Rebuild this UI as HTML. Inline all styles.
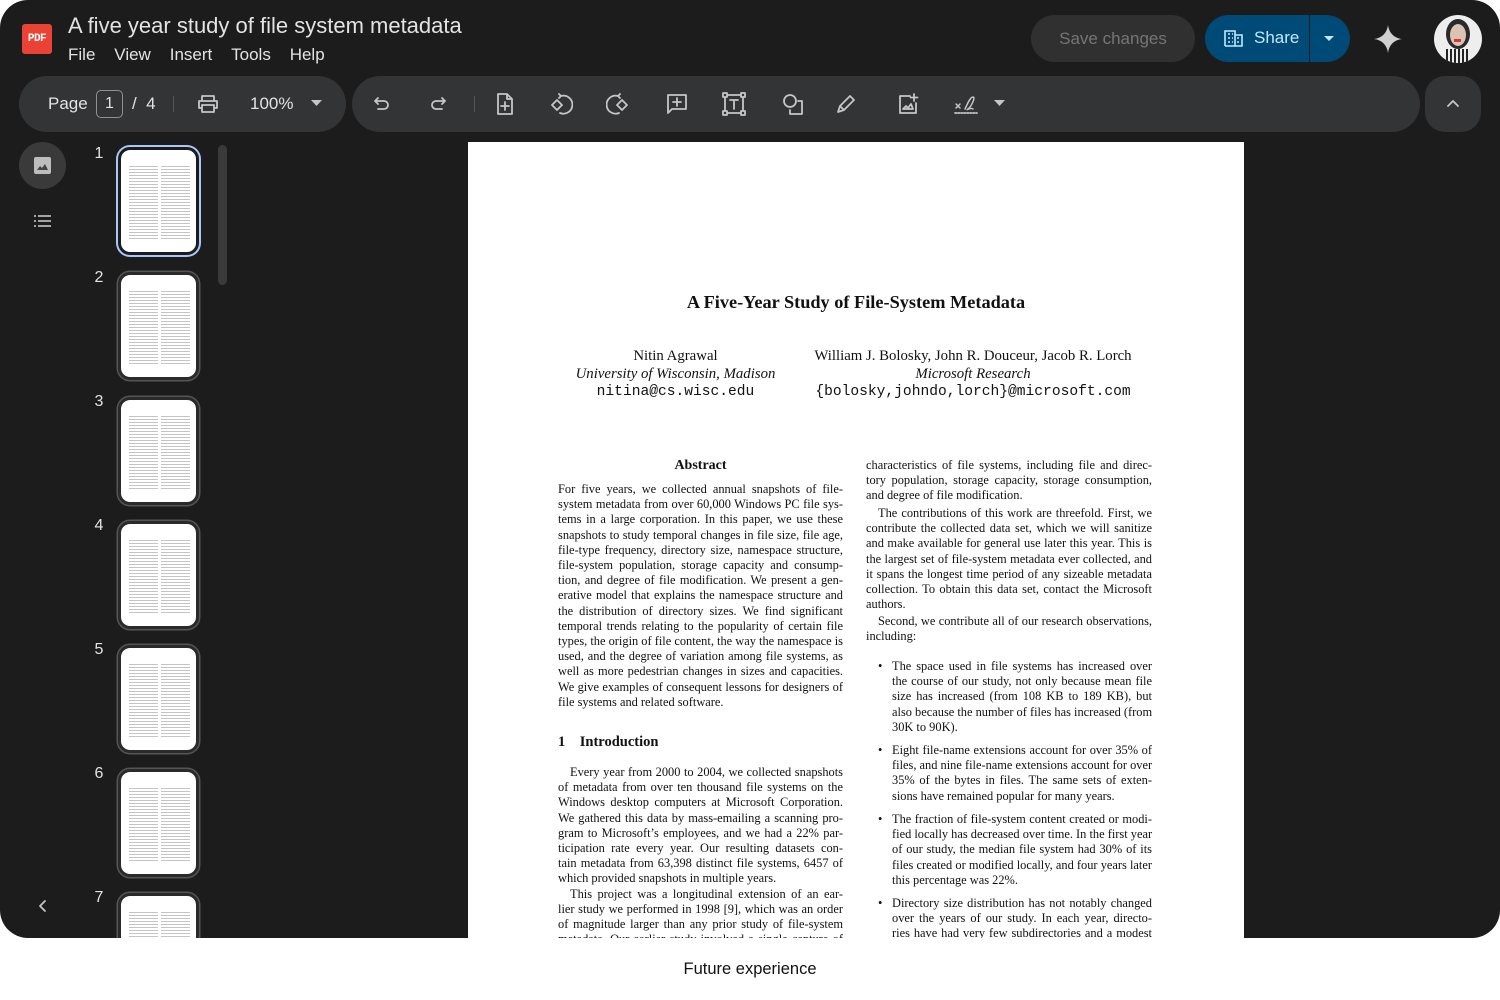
<!DOCTYPE html>
<html><head><meta charset="utf-8"><style>
*{margin:0;padding:0;box-sizing:border-box}
body{width:1500px;height:1000px;background:#fff;position:relative;overflow:hidden;font-family:"Liberation Sans",sans-serif}
#app{position:absolute;left:0;top:0;width:1500px;height:938px;background:#1c1c1c;border-radius:28px 28px 28px 28px;overflow:hidden}
.abs{position:absolute}
.t{color:#e3e3e3}
.bar{position:absolute;background:#333436;border-radius:28px}
.ic{position:absolute;stroke:#c4c7c5;fill:none;stroke-width:1.8;stroke-linecap:round;stroke-linejoin:round}
.num{position:absolute;color:#e3e3e3;font-size:16px;width:20px;text-align:center}
.th{position:absolute;left:118px;width:81px;height:108px;border-radius:12px;border:3px solid #2a2a2a;background:#fff;box-shadow:0 0 0 1.5px #555}
.th.sel{border-color:#1c1c1c;box-shadow:0 0 0 2px #a8c7fa}
.th i{position:absolute;top:16px;bottom:12px;width:29px;background:repeating-linear-gradient(#c4c4c4 0 1px,#fff 1px 3px)}
#page{position:absolute;left:468px;top:142px;width:776px;height:796px;background:#fff;font-family:"Liberation Serif",serif;color:#111}
.col{position:absolute;font-size:12.4px;line-height:15.2px}
.col div{text-align:justify;text-align-last:justify;white-space:nowrap;overflow:visible}
.col div.e{text-align-last:left}
.col div.in{text-indent:12px}
.bl div{padding-left:26px}
.bl div.b{position:relative}
.bl div.b:before{content:"•";position:absolute;left:12px}
</style></head><body>
<div id="app">
 <div class="abs" style="left:22px;top:24px;width:30px;height:30px;background:#ea4335;border-radius:3px;color:#fff;font:bold 11px 'Liberation Mono',monospace;text-align:center;line-height:30px;letter-spacing:-0.5px">PDF</div>
 <div class="abs t" style="left:68px;top:13px;font-size:22px">A five year study of file system metadata</div>
 <div class="abs t" style="left:68px;top:45px;font-size:17px;word-spacing:0">File&nbsp;&nbsp;&nbsp;&nbsp;View&nbsp;&nbsp;&nbsp;&nbsp;Insert&nbsp;&nbsp;&nbsp;&nbsp;Tools&nbsp;&nbsp;&nbsp;&nbsp;Help</div>
 <div class="abs" style="left:1031px;top:15px;width:164px;height:47px;border-radius:24px;background:#303030;color:#757575;font-size:17px;text-align:center;line-height:47px">Save changes</div>
 <div class="abs" style="left:1205px;top:15px;width:145px;height:47px;border-radius:24px;background:#004a77;"></div>
 <div class="abs" style="left:1309px;top:15px;width:1px;height:47px;background:#1c1c1c"></div>
 <svg class="abs" style="left:1224px;top:29px" width="20" height="18" viewBox="0 0 20 18"><path d="M1 17V2h10v15M11 6h7v11H1" fill="none" stroke="#c2e7ff" stroke-width="1.6"/><path d="M4 5h2M8 5h1M4 9h2M8 9h1M4 13h2M8 13h1M13 9h2M13 13h2" stroke="#c2e7ff" stroke-width="1.6"/></svg>
 <div class="abs" style="left:1254px;top:28px;color:#c2e7ff;font-size:17px">Share</div>
 <svg class="abs" style="left:1323px;top:35px" width="12" height="8"><path d="M1 1h10L6 6z" fill="#c2e7ff"/></svg>
 <svg class="abs" style="left:1373px;top:24px" width="30" height="30" viewBox="0 0 30 30"><path d="M15 1C16 9 21 14 29 15 21 16 16 21 15 29 14 21 9 16 1 15 9 14 14 9 15 1z" fill="#d0d0d0"/></svg>
 <div class="abs" style="left:1434px;top:15px;width:48px;height:48px;border-radius:50%;background:#eee;overflow:hidden">
  <div class="abs" style="left:12px;top:4px;width:24px;height:30px;border-radius:50%;background:#2a2a2a"></div>
  <div class="abs" style="left:16px;top:9px;width:16px;height:22px;border-radius:50%;background:#d9c3b5"></div>
  <div class="abs" style="left:20px;top:24px;width:7px;height:3px;background:#d33"></div>
  <div class="abs" style="left:12px;top:34px;width:24px;height:14px;background:repeating-linear-gradient(90deg,#222 0 2px,#eee 2px 4px)"></div>
 </div>

 <div class="bar" style="left:19px;top:76px;width:327px;height:56px"></div>
 <div class="abs t" style="left:48px;top:94px;font-size:17px">Page</div>
 <div class="abs t" style="left:96px;top:90px;width:27px;height:28px;border:1.5px solid #8e918f;border-radius:5px;font-size:16px;text-align:center;line-height:25px">1</div>
 <div class="abs t" style="left:132px;top:94px;font-size:17px">/&nbsp; 4</div>
 <div class="abs" style="left:173px;top:96px;width:1px;height:16px;background:#555"></div>
 <svg class="ic" style="left:197px;top:94px" width="22" height="20" viewBox="0 0 22 20"><path d="M5 6V2h12v4M5 14H2V7h18v7h-3M5 11h12v7H5z"/></svg>
 <div class="abs t" style="left:250px;top:94px;font-size:17px">100%</div>
 <svg class="abs" style="left:311px;top:100px" width="11" height="7"><path d="M0 0h11L5.5 6z" fill="#c4c7c5"/></svg>

 <div class="bar" style="left:352px;top:76px;width:1068px;height:56px"></div>
 <svg class="ic" style="left:372px;top:94px" width="20" height="20" viewBox="0 0 20 20"><path d="M6 4L3 7l3 3M3 7h9a4 4 0 010 8H6"/></svg>
 <svg class="ic" style="left:428px;top:94px" width="20" height="20" viewBox="0 0 20 20"><path d="M14 4l3 3-3 3M17 7H8a4 4 0 000 8h6"/></svg>
 <div class="abs" style="left:474px;top:96px;width:1px;height:16px;background:#555"></div>
 <svg class="ic" style="left:494px;top:92px" width="22" height="24" viewBox="0 0 22 24"><path d="M4 2h9l5 5v15H4zM13 2v5h5M11 10v8M7 14h8"/></svg>
 <svg class="ic" style="left:549px;top:92px" width="24" height="24" viewBox="0 0 24 24"><path d="M3 13l5-5 5 5-5 5zM12 4a9 9 0 11-1 17M12 4l-2-2M12 4l-2 2"/></svg>
 <svg class="ic" style="left:606px;top:92px" width="24" height="24" viewBox="0 0 24 24"><path d="M11 13l5-5 5 5-5 5zM12 4a9 9 0 101 17M12 4l2-2M12 4l2 2"/></svg>
 <svg class="ic" style="left:665px;top:92px" width="24" height="24" viewBox="0 0 24 24"><path d="M3 3h18v14H7l-4 4zM12 6v8M8 10h8"/></svg>
 <svg class="ic" style="left:721px;top:91px" width="26" height="26" viewBox="0 0 26 26"><path d="M6 4h14M6 22h14M4 6v14M22 6v14M2 2h4v4H2zM20 2h4v4h-4zM2 20h4v4H2zM20 20h4v4h-4zM9 9h8M13 9v9"/></svg>
 <svg class="ic" style="left:781px;top:92px" width="24" height="24" viewBox="0 0 24 24"><circle cx="9" cy="9" r="6"/><path d="M17 9h4v13H9v-4"/></svg>
 <svg class="ic" style="left:834px;top:92px" width="24" height="24" viewBox="0 0 24 24"><path d="M4 20l2-6L16 4l4 4-10 10zM6 14l4 4"/></svg>
 <svg class="ic" style="left:896px;top:92px" width="24" height="24" viewBox="0 0 24 24"><path d="M14 4H4v17h16V11M18 2v7M14.5 5.5h7M7 17l3-3 2 2 3-4 2 5z"/></svg>
 <svg class="ic" style="left:953px;top:92px" width="26" height="24" viewBox="0 0 26 24"><path d="M3 12l4 4M7 12l-4 4M12 17c2-4 5-12 8-12s-2 10-5 12 3-2 5 0" stroke-width="1.5"/><path d="M2 21h22" stroke-dasharray="1.5 1.5"/></svg>
 <svg class="abs" style="left:994px;top:100px" width="11" height="7"><path d="M0 0h11L5.5 6z" fill="#c4c7c5"/></svg>

 <div class="bar" style="left:1425px;top:76px;width:56px;height:56px;border-radius:20px"></div>
 <svg class="ic" style="left:1446px;top:98px" width="14" height="10" viewBox="0 0 14 10"><path d="M2 8l5-5 5 5"/></svg>

 <div class="abs" style="left:19px;top:142px;width:47px;height:47px;border-radius:50%;background:#3a3a3a"></div>
 <svg class="abs" style="left:34px;top:157px" width="17" height="17" viewBox="0 0 17 17"><rect width="17" height="17" rx="2" fill="#bdbdbd"/><path d="M3 13l3-4 2 2 3-4 3 6z" fill="#444"/></svg>
 <svg class="abs" style="left:34px;top:215px" width="17" height="12" viewBox="0 0 17 12"><path d="M0 1h2M4 1h13M0 6h2M4 6h13M0 11h2M4 11h13" stroke="#d0d0d0" stroke-width="1.6"/></svg>
 <svg class="ic" style="left:36px;top:898px" width="12" height="16" viewBox="0 0 12 16"><path d="M9 3L4 8l5 5"/></svg>
 <div class="abs" style="left:218px;top:145px;width:9px;height:140px;border-radius:5px;background:#3a3a3a"></div>

 <div class="num" style="left:89px;top:145px">1</div>
 <div class="num" style="left:89px;top:269px">2</div>
 <div class="num" style="left:89px;top:393px">3</div>
 <div class="num" style="left:89px;top:517px">4</div>
 <div class="num" style="left:89px;top:641px">5</div>
 <div class="num" style="left:89px;top:765px">6</div>
 <div class="num" style="left:89px;top:889px">7</div>
 <div class="th sel" style="top:147px"><i style="left:8px"></i><i style="left:40px"></i></div>
 <div class="th" style="top:272px"><i style="left:8px"></i><i style="left:40px"></i></div>
 <div class="th" style="top:397px"><i style="left:8px"></i><i style="left:40px"></i></div>
 <div class="th" style="top:521px"><i style="left:8px"></i><i style="left:40px"></i></div>
 <div class="th" style="top:645px"><i style="left:8px"></i><i style="left:40px"></i></div>
 <div class="th" style="top:769px"><i style="left:8px"></i><i style="left:40px"></i></div>
 <div class="th" style="top:893px"><i style="left:8px"></i><i style="left:40px"></i></div>

 <div id="page">
  <div class="abs" style="left:0;width:776px;top:150px;text-align:center;font-weight:bold;font-size:18.3px">A Five-Year Study of File-System Metadata</div>
  <div class="abs" style="left:90px;width:235px;top:206px;text-align:center;font-size:14.8px;line-height:17.6px;white-space:nowrap">Nitin Agrawal<br><i>University of Wisconsin, Madison</i><br><span style="font-family:'Liberation Mono',monospace;font-size:14.6px">nitina@cs.wisc.edu</span></div>
  <div class="abs" style="left:330px;width:350px;top:206px;text-align:center;font-size:14.8px;line-height:17.6px;white-space:nowrap">William J. Bolosky, John R. Douceur, Jacob R. Lorch<br><i>Microsoft Research</i><br><span style="font-family:'Liberation Mono',monospace;font-size:14.6px">{bolosky,johndo,lorch}@microsoft.com</span></div>

  <div class="abs" style="left:90px;width:285px;top:316px;text-align:center;font-weight:bold;font-size:14px">Abstract</div>
  <div class="col" style="left:90px;width:285px;top:340px">
   <div>For five years, we collected annual snapshots of file-</div>
   <div>system metadata from over 60,000 Windows PC file sys-</div>
   <div>tems in a large corporation. In this paper, we use these</div>
   <div>snapshots to study temporal changes in file size, file age,</div>
   <div>file-type frequency, directory size, namespace structure,</div>
   <div>file-system population, storage capacity and consump-</div>
   <div>tion, and degree of file modification. We present a gen-</div>
   <div>erative model that explains the namespace structure and</div>
   <div>the distribution of directory sizes. We find significant</div>
   <div>temporal trends relating to the popularity of certain file</div>
   <div>types, the origin of file content, the way the namespace is</div>
   <div>used, and the degree of variation among file systems, as</div>
   <div>well as more pedestrian changes in sizes and capacities.</div>
   <div>We give examples of consequent lessons for designers of</div>
   <div class="e">file systems and related software.</div>
  </div>
  <div class="abs" style="left:90px;top:592px;font-weight:bold;font-size:14.5px">1&nbsp;&nbsp;&nbsp;&nbsp;Introduction</div>
  <div class="col" style="left:90px;width:285px;top:623px">
   <div class="in">Every year from 2000 to 2004, we collected snapshots</div>
   <div>of metadata from over ten thousand file systems on the</div>
   <div>Windows desktop computers at Microsoft Corporation.</div>
   <div>We gathered this data by mass-emailing a scanning pro-</div>
   <div>gram to Microsoft’s employees, and we had a 22% par-</div>
   <div>ticipation rate every year. Our resulting datasets con-</div>
   <div>tain metadata from 63,398 distinct file systems, 6457 of</div>
   <div class="e">which provided snapshots in multiple years.</div>
   <div class="in">This project was a longitudinal extension of an ear-</div>
   <div>lier study we performed in 1998 [9], which was an order</div>
   <div>of magnitude larger than any prior study of file-system</div>
   <div>metadata. Our earlier study involved a single capture of</div>
  </div>

  <div class="col" style="left:398px;width:286px;top:316px">
   <div>characteristics of file systems, including file and direc-</div>
   <div>tory population, storage capacity, storage consumption,</div>
   <div class="e">and degree of file modification.</div>
  </div>
  <div class="col" style="left:398px;width:286px;top:364px">
   <div class="in">The contributions of this work are threefold. First, we</div>
   <div>contribute the collected data set, which we will sanitize</div>
   <div>and make available for general use later this year. This is</div>
   <div>the largest set of file-system metadata ever collected, and</div>
   <div>it spans the longest time period of any sizeable metadata</div>
   <div>collection. To obtain this data set, contact the Microsoft</div>
   <div class="e">authors.</div>
  </div>
  <div class="col" style="left:398px;width:286px;top:472px">
   <div class="in">Second, we contribute all of our research observations,</div>
   <div class="e">including:</div>
  </div>
  <div class="col bl" style="left:398px;width:286px;top:517px">
   <div class="b">The space used in file systems has increased over</div>
   <div>the course of our study, not only because mean file</div>
   <div>size has increased (from 108 KB to 189 KB), but</div>
   <div>also because the number of files has increased (from</div>
   <div class="e">30K to 90K).</div>
  </div>
  <div class="col bl" style="left:398px;width:286px;top:601px">
   <div class="b">Eight file-name extensions account for over 35% of</div>
   <div>files, and nine file-name extensions account for over</div>
   <div>35% of the bytes in files. The same sets of exten-</div>
   <div class="e">sions have remained popular for many years.</div>
  </div>
  <div class="col bl" style="left:398px;width:286px;top:670px">
   <div class="b">The fraction of file-system content created or modi-</div>
   <div>fied locally has decreased over time. In the first year</div>
   <div>of our study, the median file system had 30% of its</div>
   <div>files created or modified locally, and four years later</div>
   <div class="e">this percentage was 22%.</div>
  </div>
  <div class="col bl" style="left:398px;width:286px;top:754px">
   <div class="b">Directory size distribution has not notably changed</div>
   <div>over the years of our study. In each year, directo-</div>
   <div>ries have had very few subdirectories and a modest</div>
  </div>
 </div>
</div>
<div class="abs" style="left:0;width:1500px;top:960px;text-align:center;font-size:16.5px;color:#111">Future experience</div>
</body></html>
